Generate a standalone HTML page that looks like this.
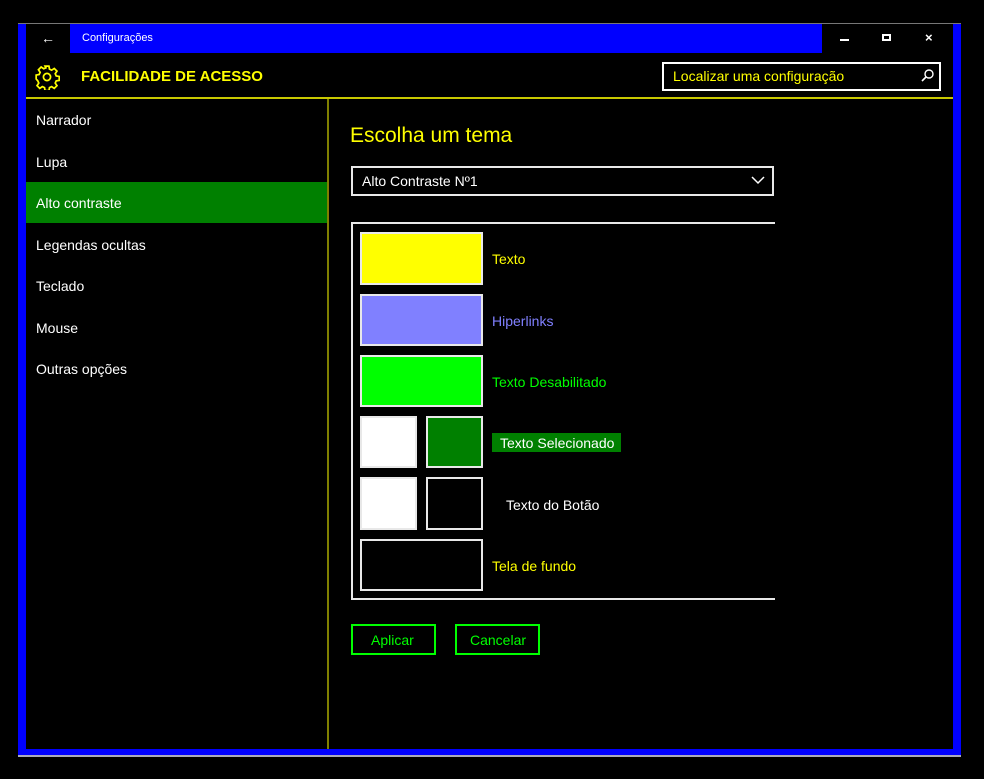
<!DOCTYPE html>
<html><head><meta charset="utf-8"><style>
*{margin:0;padding:0;box-sizing:border-box}
body{width:984px;height:779px;background:#000;position:relative;overflow:hidden;font-family:"Liberation Sans","DejaVu Sans",sans-serif;}
.a{position:absolute}
.t{position:absolute;white-space:nowrap;font-size:14px;color:#fff}
.sw{position:absolute;border:2px solid #e8e8e8}
</style></head><body>
<!-- window frame -->
<div class="a" style="left:18px;top:23px;width:943px;height:734px;background:#0000ff;border-top:1px solid #777;border-bottom:2px solid #aab;"></div>
<div class="a" style="left:26px;top:24px;width:927px;height:725px;background:#000"></div>
<!-- title bar -->
<div class="a" style="left:70px;top:24px;width:752px;height:29px;background:#0000ff"></div>
<div class="t" style="left:41px;top:30px;font-size:14px">&#8592;</div>
<div class="t" style="left:82px;top:32px;font-size:11px">Configurações</div>
<div class="a" style="left:840px;top:39px;width:9px;height:2px;background:#fff"></div>
<div class="a" style="left:882px;top:34px;width:9px;height:7px;border:2px solid #fff"></div>
<div class="t" style="left:925px;top:30px;font-size:13px;font-weight:bold">×</div>
<!-- header -->
<svg class="a" style="left:34px;top:64px" width="26" height="26" viewBox="0 0 24 24"><path fill="none" stroke="#ffff00" stroke-width="1.6" d="M10.2 2h3.6l.5 2.8 2 .9 2.4-1.6 2.5 2.5-1.6 2.4.9 2 2.8.5v3.6l-2.8.5-.9 2 1.6 2.4-2.5 2.5-2.4-1.6-2 .9-.5 2.8h-3.6l-.5-2.8-2-.9-2.4 1.6-2.5-2.5 1.6-2.4-.9-2L2 13.8v-3.6l2.8-.5.9-2-1.6-2.4 2.5-2.5 2.4 1.6 2-.9z"/><circle cx="12" cy="12" r="3.3" fill="none" stroke="#ffff00" stroke-width="1.6"/></svg>
<div class="t" style="left:81px;top:68px;font-size:15px;font-weight:bold;color:#ffff00">FACILIDADE DE ACESSO</div>
<div class="a" style="left:662px;top:62px;width:279px;height:29px;border:2px solid #fff"></div>
<div class="t" style="left:673px;top:68px;font-size:14px;color:#ffff00">Localizar uma configuração</div>
<svg class="a" style="left:920px;top:68px" width="15" height="15" viewBox="0 0 15 15"><circle cx="9" cy="6" r="4" fill="none" stroke="#fff" stroke-width="1.4"/><path d="M6 9L2 13" stroke="#fff" stroke-width="1.6"/></svg>
<div class="a" style="left:26px;top:97px;width:927px;height:2px;background:#c8c800"></div>
<div class="a" style="left:327px;top:99px;width:2px;height:650px;background:#808000"></div>
<!-- sidebar -->
<div class="a" style="left:26px;top:182px;width:301px;height:41px;background:#008000"></div>
<div class="t" style="left:36px;top:112px">Narrador</div>
<div class="t" style="left:36px;top:154px">Lupa</div>
<div class="t" style="left:36px;top:195px">Alto contraste</div>
<div class="t" style="left:36px;top:237px">Legendas ocultas</div>
<div class="t" style="left:36px;top:278px">Teclado</div>
<div class="t" style="left:36px;top:320px">Mouse</div>
<div class="t" style="left:36px;top:361px">Outras opções</div>
<!-- content -->
<div class="t" style="left:350px;top:124px;font-size:21px;color:#ffff00">Escolha um tema</div>
<div class="a" style="left:351px;top:166px;width:423px;height:30px;border:2px solid #e8e8e8"></div>
<div class="t" style="left:362px;top:173px">Alto Contraste Nº1</div>
<svg class="a" style="left:751px;top:176px" width="14" height="9" viewBox="0 0 14 9"><path d="M1 1l6 6 6-6" fill="none" stroke="#fff" stroke-width="1.5"/></svg>
<div class="a" style="left:351px;top:222px;width:424px;height:378px;border:2px solid #e8e8e8;border-right:none"></div>
<div class="sw" style="left:360px;top:232px;width:123px;height:53px;background:#ffff00"></div>
<div class="t" style="left:492px;top:251px;color:#ffff00">Texto</div>
<div class="sw" style="left:360px;top:294px;width:123px;height:52px;background:#8080ff"></div>
<div class="t" style="left:492px;top:313px;color:#8080ff">Hiperlinks</div>
<div class="sw" style="left:360px;top:355px;width:123px;height:52px;background:#00ff00"></div>
<div class="t" style="left:492px;top:374px;color:#00ff00">Texto Desabilitado</div>
<div class="sw" style="left:360px;top:416px;width:57px;height:52px;background:#fff"></div>
<div class="sw" style="left:426px;top:416px;width:57px;height:52px;background:#008000"></div>
<div class="a" style="left:492px;top:433px;width:129px;height:19px;background:#008000"></div>
<div class="t" style="left:500px;top:435px">Texto Selecionado</div>
<div class="sw" style="left:360px;top:477px;width:57px;height:53px;background:#fff"></div>
<div class="sw" style="left:426px;top:477px;width:57px;height:53px;background:#000"></div>
<div class="t" style="left:506px;top:497px">Texto do Botão</div>
<div class="sw" style="left:360px;top:539px;width:123px;height:52px;background:#000"></div>
<div class="t" style="left:492px;top:558px;color:#ffff00">Tela de fundo</div>
<div class="a" style="left:351px;top:624px;width:85px;height:31px;border:2px solid #00ff00"></div>
<div class="t" style="left:371px;top:632px;color:#00ff00">Aplicar</div>
<div class="a" style="left:455px;top:624px;width:85px;height:31px;border:2px solid #00ff00"></div>
<div class="t" style="left:470px;top:632px;color:#00ff00">Cancelar</div>
</body></html>
